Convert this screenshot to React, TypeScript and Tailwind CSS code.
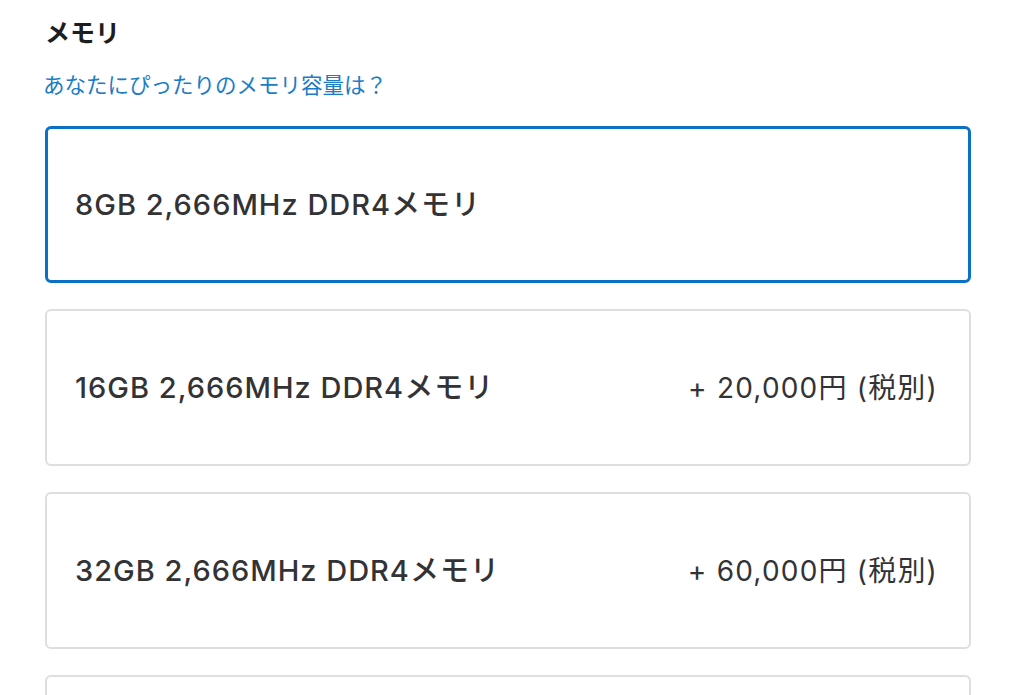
import React from "react";

const font = { fontFamily: '"Inter", "Noto Sans CJK JP", sans-serif' };

const options = [
  { label: "8GB 2,666MHz DDR4メモリ", price: "", selected: true },
  { label: "16GB 2,666MHz DDR4メモリ", price: "+ 20,000円 (税別)", selected: false },
  { label: "32GB 2,666MHz DDR4メモリ", price: "+ 60,000円 (税別)", selected: false },
];

export default function App() {
  return (
    <div className="w-[1024px] h-[695px] overflow-hidden bg-white px-[45px] pt-[16px]" style={font}>
      <h2 className="text-[25px] font-bold text-[#1d1d1f] leading-[34px]">メモリ</h2>
      <a className="block mt-[21px] text-[21.5px] leading-[28px] text-[#1a7dc5] -ml-[2px]">あなたにぴったりのメモリ容量は？</a>
      <div className="mt-[27px] flex flex-col gap-[26px] w-[926px]">
        {options.map((o) => (
          <div
            key={o.label}
            className={
              o.selected
                ? "h-[157px] shrink-0 rounded-[6px] border-[3px] border-[#0a71c6] flex items-center justify-between pl-[27px] pr-[30px]"
                : "h-[157px] shrink-0 rounded-[6px] border-[2px] border-[#dedede] flex items-center justify-between pl-[28px] pr-[31px]"
            }
          >
            <span className="text-[29px] font-medium text-[#333336] tracking-[1px]">{o.label}</span>
            {o.price && <span className="text-[28px] text-[#333336] tracking-[1.2px]">{o.price}</span>}
          </div>
        ))}
        <div className="h-[157px] rounded-[6px] border-[2px] border-[#dedede] shrink-0" />
      </div>
    </div>
  );
}
